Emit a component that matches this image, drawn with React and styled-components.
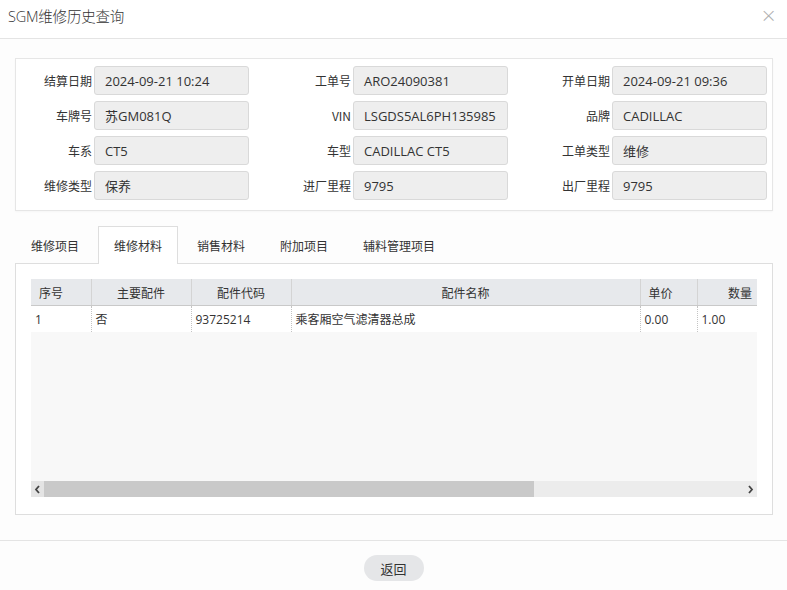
import React from "react";
import styled, { createGlobalStyle } from "styled-components";

const GlobalStyle = createGlobalStyle`
  html, body {
    margin: 0;
    padding: 0;
    background: #fdfdfd;
  }
  body {
    font-family: "Open Sans", "Noto Sans CJK SC", sans-serif;
    color: #333;
  }
`;

const Dialog = styled.div`
  width: 787px;
  height: 590px;
  display: flex;
  flex-direction: column;
  background: #fdfdfd;
  overflow: hidden;
`;

const Header = styled.div`
  flex-shrink: 0;
  height: 39px;
  box-sizing: border-box;
  border-bottom: 1px solid #e4e4e4;
  display: flex;
  align-items: center;
  justify-content: space-between;
  padding: 0 10px 8px 8px;
  background: #fff;
`;

const Title = styled.div`
  font-size: 14.5px;
  font-weight: 300;
  color: #333;
  letter-spacing: -0.2px;
`;

const Close = styled.span`
  font-size: 20px;
  color: #b0b0b0;
  line-height: 1;
  font-family: "DejaVu Sans", sans-serif;
  font-weight: 300;
`;

const Body = styled.div`
  flex-shrink: 0;
  padding: 19px 14px 0 15px;
  display: flex;
  flex-direction: column;
`;

const FormCard = styled.div`
  border: 1px solid #e6e6e6;
  background: #fff;
  padding: 7px 0 10px 0;
  display: grid;
  grid-template-columns: 78px 155px 104px 155px 104px 155px;
  row-gap: 6px;
  box-shadow: 0 1px 2px rgba(0, 0, 0, 0.03);
`;

const Field = styled.div`
  display: contents;
`;

const Label = styled.label`
  font-size: 12px;
  color: #333;
  text-align: right;
  padding-right: 2px;
  align-self: center;
  font-family: "Noto Sans CJK SC", sans-serif;
`;

const Value = styled.div`
  height: 29px;
  box-sizing: border-box;
  border: 1px solid #d9d9d9;
  border-radius: 3px;
  background: #eeeeee;
  font-size: 13px;
  color: #333;
  padding-left: 10px;
  display: flex;
  align-items: center;
  white-space: nowrap;
  overflow: hidden;
`;

const Tabs = styled.div`
  display: flex;
  margin-top: 15px;
  height: 37px;
  position: relative;
  z-index: 1;
`;

const Tab = styled.div`
  padding: 0 15px;
  margin-right: 3px;
  font-size: 12px;
  display: flex;
  align-items: center;
  box-sizing: border-box;
  height: 38px;
  color: #333;
  font-family: "Noto Sans CJK SC", sans-serif;
  border: 1px solid ${(p) => (p.$active ? "#dedede" : "transparent")};
  border-bottom: none;
  background: ${(p) => (p.$active ? "#fff" : "transparent")};
`;

const Panel = styled.div`
  border: 1px solid #dedede;
  background: #fff;
  padding: 15px;
  height: 252px;
  box-sizing: border-box;
`;

const Grid = styled.div`
  height: 218px;
  display: flex;
  flex-direction: column;
  background: #f8f8f8;
  overflow: hidden;
`;

const Viewport = styled.div`
  flex: 1;
  overflow: hidden;
`;

const Table = styled.table`
  border-collapse: collapse;
  table-layout: fixed;
  width: 752px;
  font-size: 12px;
  font-family: "Open Sans", "Noto Sans CJK SC", sans-serif;
`;

const Th = styled.th`
  height: 26px;
  padding: 0 8px;
  background: #e7e9ec;
  font-weight: normal;
  color: #333;
  text-align: ${(p) => p.$align || "center"};
  border-right: 1px solid #d4d4d4;
  border-bottom: 1px solid #c9c9c9;
  white-space: nowrap;
  font-family: "Noto Sans CJK SC", sans-serif;
`;

const Td = styled.td`
  height: 26px;
  padding: 0 4px;
  background: #fff;
  color: #333;
  border-right: 1px dotted #c4c4c4;
  white-space: nowrap;
`;

const HScroll = styled.div`
  height: 16px;
  display: flex;
  align-items: stretch;
  background: #ececec;
`;

const Arrow = styled.div`
  width: 13px;
  display: flex;
  align-items: center;
  justify-content: center;
  background: ${(p) => (p.$left ? "#e4e4e4" : "transparent")};
`;

const Track = styled.div`
  flex: 1;
`;

const Thumb = styled.div`
  height: 100%;
  background: #c9c9c9;
`;

const Footer = styled.div`
  flex-shrink: 0;
  margin-top: 25px;
  border-top: 1px solid #e4e4e4;
  height: 48px;
  display: flex;
  justify-content: center;
  align-items: flex-start;
  padding-top: 14px;
`;

const Button = styled.button`
  width: 60px;
  height: 26px;
  border: none;
  border-radius: 13px;
  background: #e5e6e8;
  color: #333;
  font-size: 13px;
  font-family: "Noto Sans CJK SC", sans-serif;
`;

const fields = [
  ["结算日期", "2024-09-21 10:24"],
  ["工单号", "ARO24090381"],
  ["开单日期", "2024-09-21 09:36"],
  ["车牌号", "苏GM081Q"],
  ["VIN", "LSGDS5AL6PH135985"],
  ["品牌", "CADILLAC"],
  ["车系", "CT5"],
  ["车型", "CADILLAC CT5"],
  ["工单类型", "维修"],
  ["维修类型", "保养"],
  ["进厂里程", "9795"],
  ["出厂里程", "9795"],
];

const tabs = ["维修项目", "维修材料", "销售材料", "附加项目", "辅料管理项目"];

const columns = [
  { title: "序号", width: 60, align: "left" },
  { title: "主要配件", width: 100 },
  { title: "配件代码", width: 100 },
  { title: "配件名称", width: 349 },
  { title: "单价", width: 57, align: "left" },
  { title: "数量", width: 86 },
];

const row = ["1", "否", "93725214", "乘客厢空气滤清器总成", "0.00", "1.00"];

const Chevron = ({ dir }) => (
  <svg width="7" height="9" viewBox="0 0 7 9">
    <path
      d={dir === "left" ? "M5 1 L2 4.5 L5 8" : "M2 1 L5 4.5 L2 8"}
      fill="none"
      stroke="#444"
      strokeWidth="1.8"
    />
  </svg>
);

function App() {
  return (
    <Dialog>
      <GlobalStyle />
      <Header>
        <Title>SGM维修历史查询</Title>
        <Close>×</Close>
      </Header>
      <Body>
        <FormCard>
          {fields.map(([label, value]) => (
            <Field key={label}>
              <Label>{label}</Label>
              <Value>{value}</Value>
            </Field>
          ))}
        </FormCard>
        <Tabs>
          {tabs.map((t, i) => (
            <Tab key={t} $active={i === 1}>
              {t}
            </Tab>
          ))}
        </Tabs>
        <Panel>
          <Grid>
            <Viewport>
              <Table>
                <colgroup>
                  {columns.map((c) => (
                    <col key={c.title} style={{ width: c.width }} />
                  ))}
                </colgroup>
                <thead>
                  <tr>
                    {columns.map((c) => (
                      <Th key={c.title} $align={c.align}>
                        {c.title}
                      </Th>
                    ))}
                  </tr>
                </thead>
                <tbody>
                  <tr>
                    {row.map((v, i) => (
                      <Td key={i}>{v}</Td>
                    ))}
                  </tr>
                </tbody>
              </Table>
            </Viewport>
            <HScroll>
              <Arrow $left>
                <Chevron dir="left" />
              </Arrow>
              <Track>
                <Thumb style={{ width: `${(491 / 701) * 100}%` }} />
              </Track>
              <Arrow>
                <Chevron dir="right" />
              </Arrow>
            </HScroll>
          </Grid>
        </Panel>
      </Body>
      <Footer>
        <Button>返回</Button>
      </Footer>
    </Dialog>
  );
}

export default App;
